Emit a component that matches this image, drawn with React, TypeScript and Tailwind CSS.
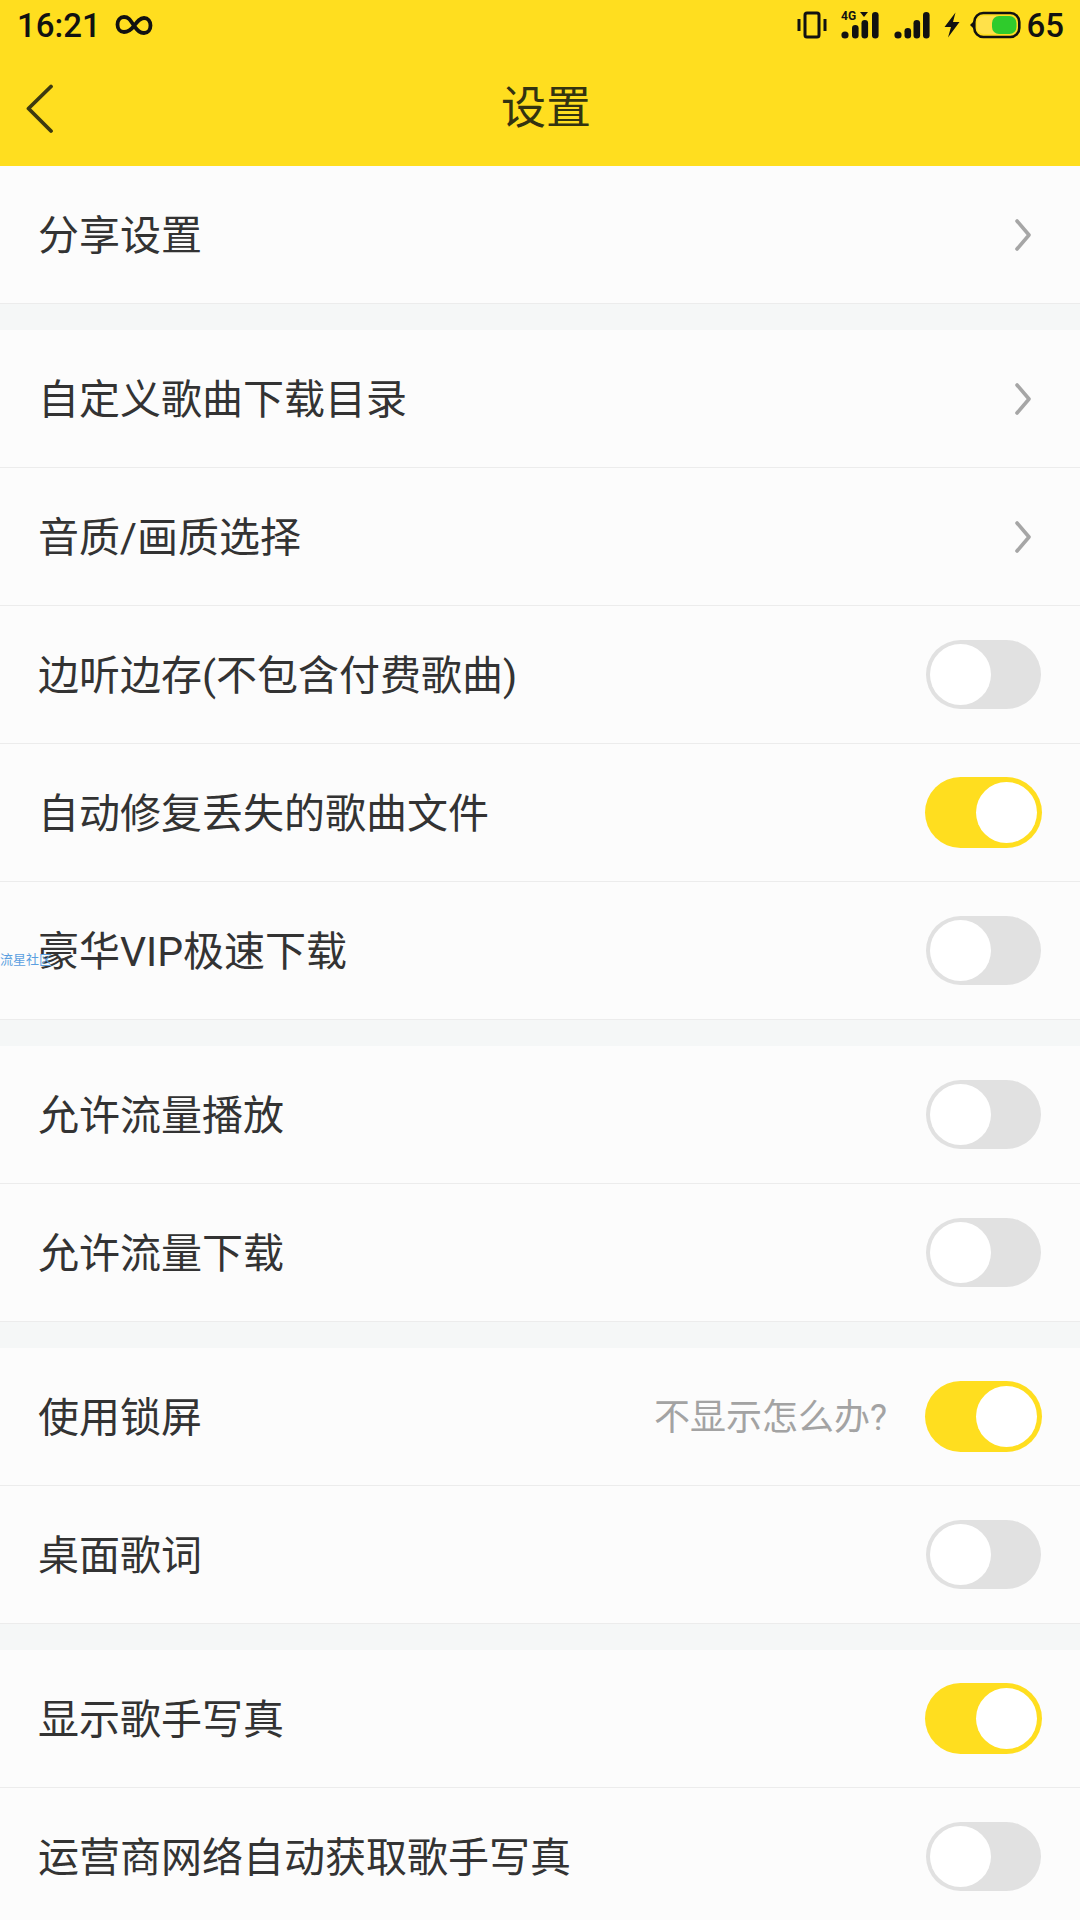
import React from "react";

const font = { fontFamily: '"Roboto", "Noto Sans CJK SC", sans-serif' };

function Toggle({ on }: { on?: boolean }) {
  if (on) {
    return (
      <div className="flex h-[71px] w-[117px] items-center justify-end rounded-full bg-[#ffde1f] pr-[5px]">
        <div className="h-[61px] w-[61px] rounded-full bg-white" />
      </div>
    );
  }
  return (
    <div className="mr-[1px] flex h-[69px] w-[115px] items-center rounded-full bg-[#e1e1e1] pl-[4px]">
      <div className="h-[61px] w-[61px] rounded-full bg-white" />
    </div>
  );
}

function Chevron() {
  return (
    <svg width="20" height="34" viewBox="0 0 20 34" className="mr-[9px]" fill="none">
      <path d="M4 3 L16 17 L4 31" stroke="#a6a6a6" strokeWidth="3.6" strokeLinecap="round" strokeLinejoin="round" />
    </svg>
  );
}

type RowT = { t: string; arrow?: boolean; on?: boolean; hint?: string };

function Row({ t, arrow, on, hint }: RowT) {
  return (
    <div className="flex h-[138px] items-center justify-between border-b border-[#ececec] pl-[38px] pr-[38px]">
      <span className="pt-[3px] text-[41px] leading-none text-[#333333]">{t}</span>
      <div className="flex items-center">
        {hint && <span className="mr-[38px] pt-[2px] text-[36px] leading-none text-[#a3a3a3]">{hint}</span>}
        {arrow ? <Chevron /> : <Toggle on={on} />}
      </div>
    </div>
  );
}

function Group({ rows }: { rows: RowT[] }) {
  return (
    <div className="bg-[#fcfcfc]">
      {rows.map((r) => (
        <Row key={r.t} {...r} />
      ))}
    </div>
  );
}

function Gap() {
  return <div className="h-[26px] bg-[#f5f7f7]" />;
}

function StatusRight() {
  return (
    <div className="flex items-center">
      <svg width="30" height="30" viewBox="0 0 30 30" fill="none" className="mr-[14px]">
        <rect x="8" y="3" width="14" height="24" rx="2" stroke="#111" strokeWidth="3" />
        <rect x="0.5" y="9" width="3" height="12" fill="#111" />
        <rect x="26.5" y="9" width="3" height="12" fill="#111" />
      </svg>
      <svg width="38" height="30" viewBox="0 0 38 30" className="mr-[15px]">
        <text x="0" y="10" fontSize="12" fontWeight="700" fill="#111" fontFamily="Roboto">4G</text>
        <circle cx="4" cy="25" r="3.6" fill="#111" />
        <rect x="11" y="15" width="6.6" height="13.5" rx="3.3" fill="#111" />
        <rect x="20.5" y="10" width="6.6" height="18.5" rx="3.3" fill="#111" />
        <path d="M19 2 H27 L23 7 Z" fill="#111" />
        <rect x="31" y="2" width="6.6" height="26.5" rx="3.3" fill="#111" />
      </svg>
      <svg width="36" height="30" viewBox="0 0 36 30" className="mr-[14px]">
        <circle cx="4" cy="25" r="3.6" fill="#111" />
        <rect x="10.5" y="18" width="6.6" height="10.5" rx="3.3" fill="#111" />
        <rect x="19.5" y="10" width="6.6" height="18.5" rx="3.3" fill="#111" />
        <rect x="29" y="2" width="6.6" height="26.5" rx="3.3" fill="#111" />
      </svg>
      <svg width="16" height="26" viewBox="0 0 16 26" className="mr-[9px]">
        <path d="M11.5 0.5 L0.5 15 H7 L4 25.5 L15.5 10 H9 Z" fill="#111" />
      </svg>
      <svg width="52" height="28" viewBox="0 0 52 28" className="mr-[5px]" fill="none">
        <path d="M5 10 L1 14 L5 18 Z" fill="#111" />
        <rect x="5.3" y="2" width="45" height="24" rx="9" stroke="#111" strokeWidth="2.6" />
        <rect x="8" y="5" width="39.5" height="18" rx="7" fill="#ffe14a" />
        <rect x="23" y="5" width="24.5" height="18" rx="7" fill="#2fcb2c" />
      </svg>
      <span className="text-[33px] font-medium leading-none text-[#111111]">65</span>
    </div>
  );
}

export default function App() {
  return (
    <div className="relative h-[1920px] w-[1080px] overflow-hidden bg-[#fcfcfc]" style={font}>
      <div className="h-[166px] bg-[#ffde1f]">
        <div className="flex h-[50px] items-center justify-between pl-[17px] pr-[16px]">
          <div className="flex items-center">
            <span className="text-[33px] font-medium leading-none text-[#111111]">16:21</span>
            <svg width="38" height="24" viewBox="0 0 38 24" className="ml-[14px]" fill="none">
              <path
                d="M19 13 C15 6 13 4 9 4 C5 4 2.5 7.5 2.5 11.5 C2.5 15.5 5 19 9 19 C13 19 15.5 17.5 19 13 C22.5 8 25 5 29 5 C33 5 35.5 8.5 35.5 12.5 C35.5 16.5 33 20 29 20 C25 20 23 18 19 13 Z"
                stroke="#111"
                strokeWidth="3.8"
              />
            </svg>
          </div>
          <StatusRight />
        </div>
        <div className="flex h-[116px] items-center pl-[26px]">
          <svg width="28" height="50" viewBox="0 0 28 50" fill="none" className="mt-[1px]">
            <path d="M25 2.5 L2.5 24.5 L25 47" stroke="#3d3a10" strokeWidth="3.8" strokeLinecap="round" strokeLinejoin="round" />
          </svg>
          <span className="ml-[447px] mt-[1px] text-[45px] leading-none text-[#333310]">设置</span>
        </div>
      </div>

      <Group rows={[{ t: "分享设置", arrow: true }]} />
      <Gap />
      <Group
        rows={[
          { t: "自定义歌曲下载目录", arrow: true },
          { t: "音质/画质选择", arrow: true },
          { t: "边听边存(不包含付费歌曲)" },
          { t: "自动修复丢失的歌曲文件", on: true },
          { t: "豪华VIP极速下载" },
        ]}
      />
      <Gap />
      <Group rows={[{ t: "允许流量播放" }, { t: "允许流量下载" }]} />
      <Gap />
      <Group rows={[{ t: "使用锁屏", on: true, hint: "不显示怎么办?" }, { t: "桌面歌词" }]} />
      <Gap />
      <Group rows={[{ t: "显示歌手写真", on: true }, { t: "运营商网络自动获取歌手写真" }]} />

      <span className="absolute left-0 top-[953px] w-[52px] overflow-hidden whitespace-nowrap text-[13px] leading-none text-[#5b9fe0]">
        流星社区
      </span>
    </div>
  );
}
